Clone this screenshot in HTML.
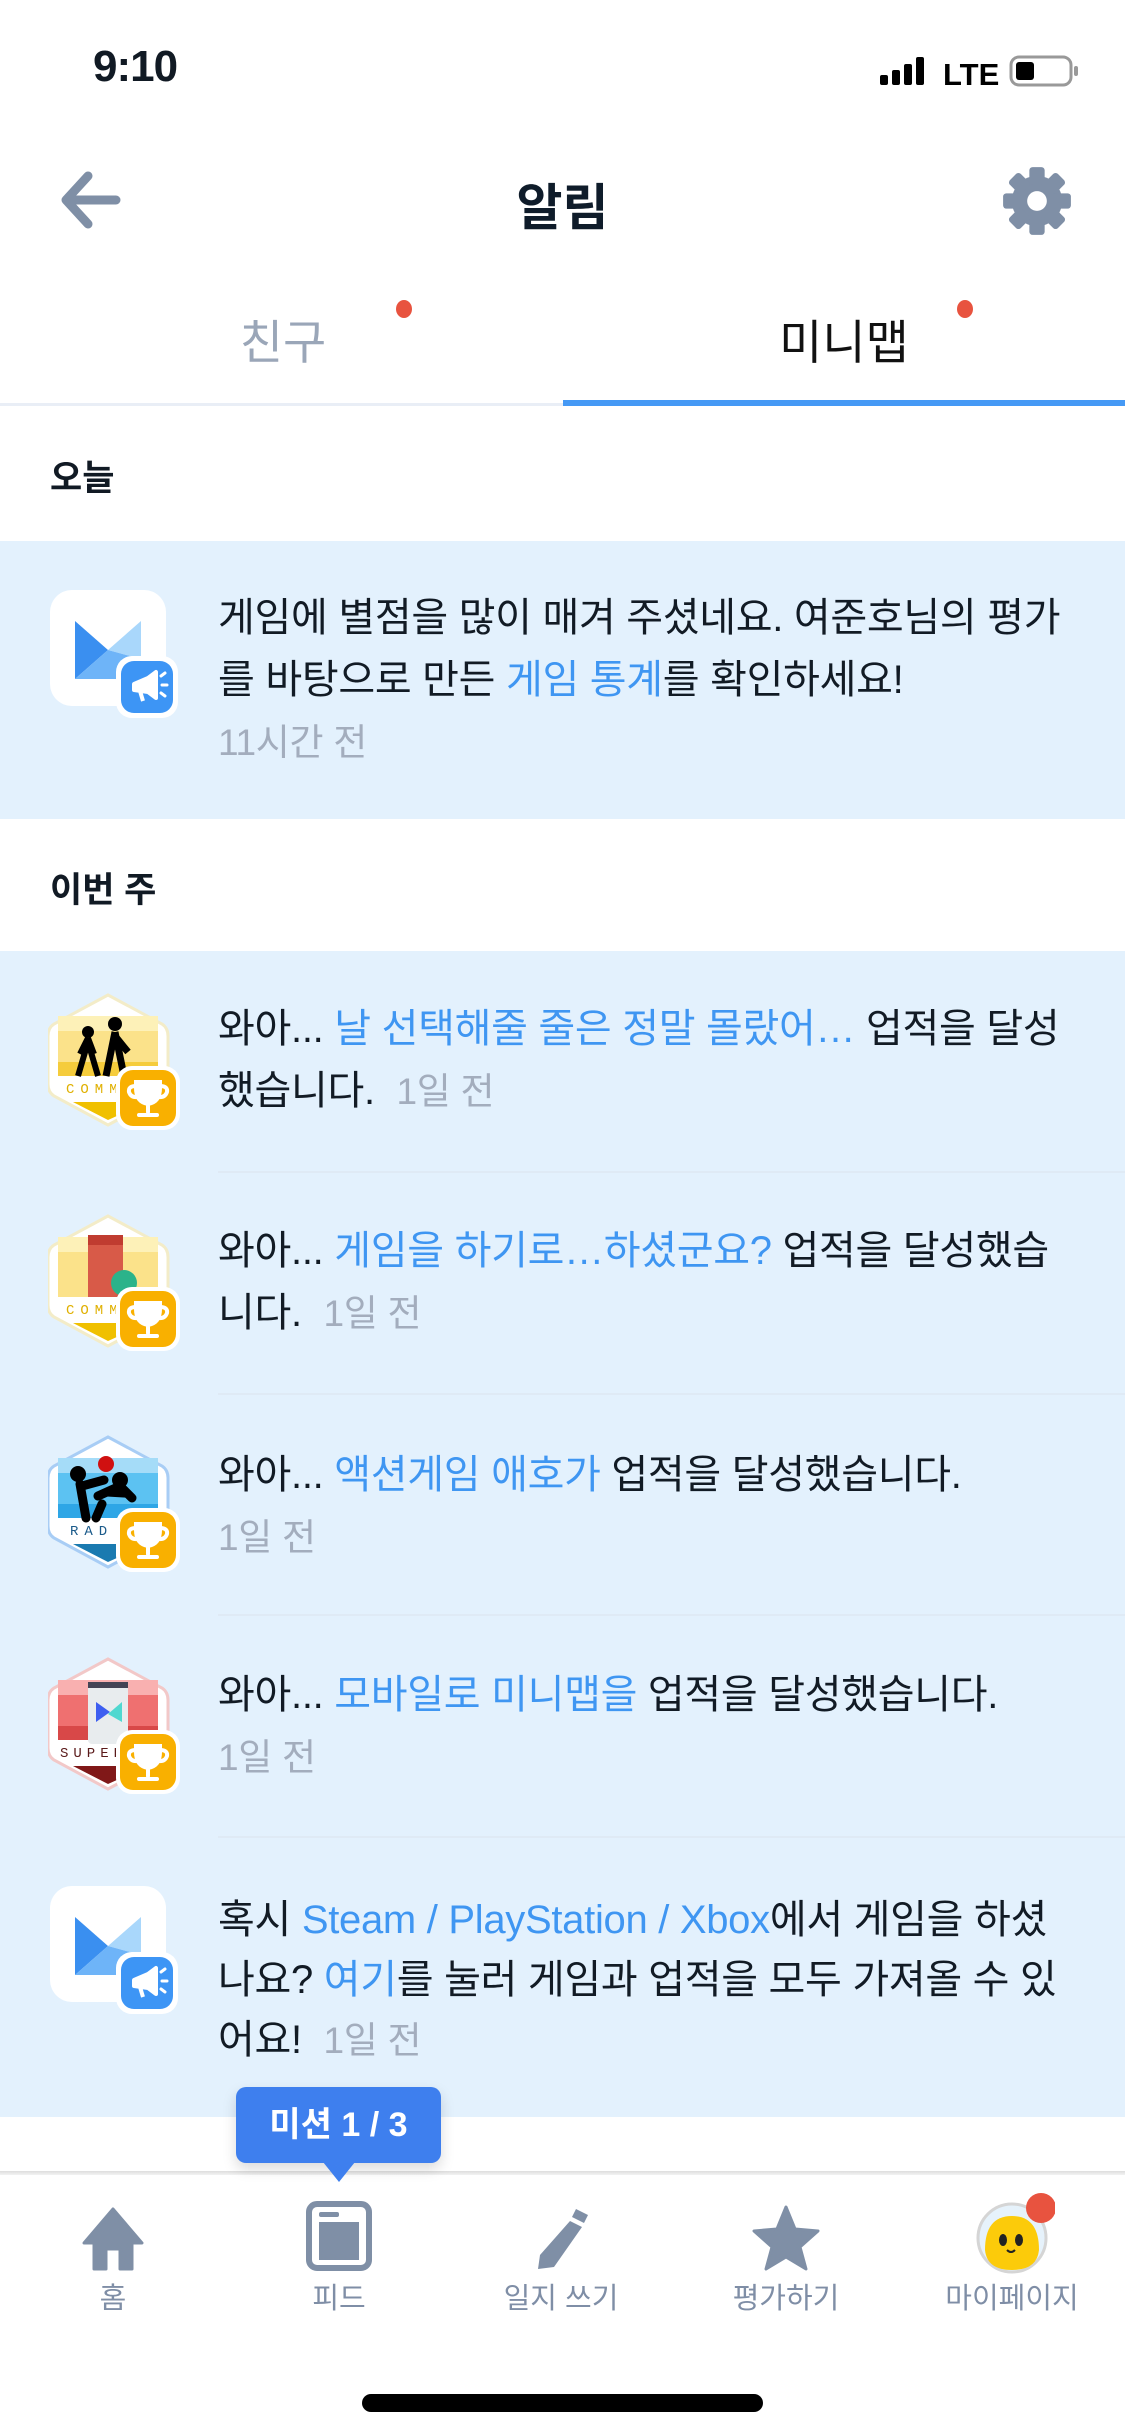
<!DOCTYPE html>
<html><head><meta charset="utf-8">
<style>
*{margin:0;padding:0;box-sizing:border-box}
body{width:1125px;height:2436px;position:relative;background:#fff;font-family:"Liberation Sans","Noto Sans CJK KR",sans-serif;color:#111a24;overflow:hidden}
.a{position:absolute}
.t{position:absolute;left:218px;font-size:40px;line-height:62px;white-space:nowrap;color:#121b25;letter-spacing:-0.3px}
.b{color:#3f96f2}
.g{color:#a3adbd;font-size:37px}
.sep{position:absolute;left:218px;right:0;height:2px;background:#dfeaf5}
.tab{position:absolute;top:2275px;font-size:29px;color:#7f8ea6;text-align:center;width:200px}
</style></head><body>
<!-- status bar -->
<div class="a" style="left:93px;top:42px;font-size:44px;font-weight:bold;letter-spacing:-1px">9:10</div>
<svg class="a" style="left:880px;top:55px" width="200" height="32">
<rect x="0" y="20" width="8" height="10" rx="2" fill="#000"/><rect x="12" y="15" width="8" height="15" rx="2" fill="#000"/><rect x="24" y="9" width="8" height="21" rx="2" fill="#000"/><rect x="36" y="2" width="8" height="28" rx="2" fill="#000"/>
<text x="63" y="30" font-family="Liberation Sans" font-size="31" font-weight="bold" fill="#000">LTE</text>
<rect x="131" y="2" width="60" height="28" rx="8" fill="none" stroke="#999" stroke-width="3"/><rect x="136" y="7" width="18" height="18" rx="3" fill="#000"/><rect x="194" y="11" width="4" height="10" rx="2" fill="#999"/>
</svg>
<!-- header -->
<svg class="a" style="left:58px;top:170px" width="64" height="60" viewBox="0 0 64 60"><path d="M30 6 L8 30 L30 54 M8 30 H58" stroke="#7f8fa6" stroke-width="9" fill="none" stroke-linecap="round" stroke-linejoin="round"/></svg>
<div class="a" style="left:0;width:1125px;top:168px;text-align:center;font-size:50px;font-weight:bold;color:#0f1c2a">알림</div>
<svg class="a" style="left:1002px;top:166px" width="70" height="70" viewBox="0 0 64 64"><g fill="#7f8fa6"><circle cx="32" cy="32" r="23"/><g id="tt"><rect x="25" y="1" width="14" height="16" rx="3"/><rect x="25" y="47" width="14" height="16" rx="3"/></g><use href="#tt" transform="rotate(45 32 32)"/><use href="#tt" transform="rotate(90 32 32)"/><use href="#tt" transform="rotate(135 32 32)"/></g><circle cx="32" cy="32" r="9" fill="#fff"/></svg>
<!-- tabs -->
<div class="a" style="left:183px;width:200px;top:304px;text-align:center;font-size:47px;color:#9aa6b8">친구</div>
<div class="a" style="left:744px;width:200px;top:304px;text-align:center;font-size:47px;color:#111">미니맵</div>
<div class="a" style="left:396px;top:300px;width:16px;height:18px;border-radius:50%;background:#e8533f"></div>
<div class="a" style="left:957px;top:300px;width:16px;height:18px;border-radius:50%;background:#e8533f"></div>
<div class="a" style="left:0;top:403px;width:563px;height:3px;background:#e9eef6"></div>
<div class="a" style="left:563px;top:400px;width:562px;height:6px;background:#4599f5"></div>
<!-- sections -->
<div class="a" style="left:50px;top:450px;font-size:35px;font-weight:bold">오늘</div>
<div class="a" style="left:0;top:541px;width:1125px;height:278px;background:#e3f1fd"></div>
<div class="a" style="left:50px;top:862px;font-size:35px;font-weight:bold">이번 주</div>
<div class="a" style="left:0;top:951px;width:1125px;height:1166px;background:#e3f1fd"></div>
<div class="sep" style="top:1171px"></div><div class="sep" style="top:1393px"></div><div class="sep" style="top:1614px"></div><div class="sep" style="top:1836px"></div>

<!-- app icon today -->
<svg class="a" style="left:48px;top:588px" width="132" height="132" viewBox="0 0 132 132">
<rect x="2" y="2" width="116" height="116" rx="22" fill="#fff"/>
<polygon points="27,33 60,62 27,91" fill="#3a8ff0"/><polygon points="93,33 93,71 60,62" fill="#a9d7fb"/><polygon points="27,91 60,62 93,71 93,91" fill="#6eb4f8"/>
<rect x="68" y="68" width="62" height="62" rx="16" fill="#fff"/><rect x="73" y="73" width="52" height="52" rx="13" fill="#3d95f5"/>
<path d="M86 96 L100 90 L108 84 L108 110 L100 104 L86 102 Z M92 103 L95 113" stroke="#fff" stroke-width="4" fill="#fff" stroke-linejoin="round"/><path d="M113 88 L117 85 M114 97 H119 M113 105 L117 108" stroke="#fff" stroke-width="3" stroke-linecap="round"/>
</svg>
<div class="t" style="top:587px">게임에 별점을 많이 매겨 주셨네요. 여준호님의 평가<br>를 바탕으로 만든 <span class="b">게임 통계</span>를 확인하세요!<br><span class="g">11시간 전</span></div>

<!-- badges -->
<svg width="0" height="0" style="position:absolute"><defs>
<g id="trophy"><rect x="68" y="74" width="64" height="64" rx="16" fill="#fff"/><rect x="72" y="78" width="56" height="56" rx="13" fill="#f9b000"/>
<path d="M88 90 H112 V96 Q112 110 100 112 Q88 110 88 96 Z M88 94 Q80 94 81 100 Q83 106 90 105 M112 94 Q120 94 119 100 Q117 106 110 105 M100 112 V120 M91 123 H109" stroke="#fff" stroke-width="4" fill="none" stroke-linecap="round"/><path d="M88 90 H112 V96 Q112 110 100 112 Q88 110 88 96 Z" fill="#fff"/></g>
<path id="hex" d="M60 3 L114 32 Q120 36 120 44 V92 Q120 100 114 104 L60 133 L6 104 Q0 100 0 92 V44 Q0 36 6 32 Z"/>
</defs></svg>

<svg class="a" style="left:48px;top:992px" width="140" height="145" viewBox="0 0 140 145">
<use href="#hex" fill="#fff" stroke="#f3ecc8" stroke-width="3"/><rect x="10" y="24" width="100" height="60" fill="#fbe28a"/><rect x="10" y="24" width="100" height="15" fill="#fdf1b8"/><rect x="10" y="70" width="100" height="14" fill="#f5cc3c"/>
<circle cx="40" cy="40" r="6" fill="#000"/><path d="M40 46 L32 62 M40 46 L46 62 M40 50 L30 84 M40 50 L50 84" stroke="#000" stroke-width="6"/><circle cx="67" cy="32" r="7" fill="#000"/><path d="M67 40 L58 84 M67 40 L76 84 M67 44 L80 60" stroke="#000" stroke-width="7"/>
<text x="18" y="101" font-size="14" fill="#e0b000" font-family="Liberation Mono" letter-spacing="6">COMM</text><path d="M25 110 L60 128 L100 110 Z" fill="#f0c000"/>
<use href="#trophy"/></svg>

<svg class="a" style="left:48px;top:1213px" width="140" height="145" viewBox="0 0 140 145">
<use href="#hex" fill="#fff" stroke="#f3ecc8" stroke-width="3"/><rect x="10" y="24" width="100" height="60" fill="#fbe28a"/><rect x="10" y="24" width="100" height="15" fill="#fdf1b8"/>
<rect x="40" y="22" width="35" height="62" fill="#d85a48"/><rect x="40" y="22" width="35" height="10" fill="#c03c30"/><circle cx="76" cy="70" r="13" fill="#2bb38a"/>
<text x="18" y="101" font-size="14" fill="#e0b000" font-family="Liberation Mono" letter-spacing="6">COMM</text><path d="M25 110 L60 128 L100 110 Z" fill="#f0c000"/>
<use href="#trophy"/></svg>

<svg class="a" style="left:48px;top:1434px" width="140" height="145" viewBox="0 0 140 145">
<use href="#hex" fill="#fff" stroke="#a8cdf5" stroke-width="3"/><rect x="10" y="24" width="100" height="60" fill="#5cc2f2"/><rect x="10" y="24" width="100" height="15" fill="#a5dcf8"/><rect x="10" y="70" width="100" height="14" fill="#2ea6e6"/>
<circle cx="30" cy="40" r="8" fill="#000"/><circle cx="72" cy="46" r="8" fill="#000"/><path d="M32 50 L38 84 M34 52 L56 46 M50 62 L72 52 L84 64 M54 70 L48 84" stroke="#000" stroke-width="9" stroke-linecap="round"/><circle cx="58" cy="30" r="8" fill="#d01010"/>
<text x="22" y="101" font-size="14" fill="#1a5a8a" font-family="Liberation Mono" letter-spacing="6">RAD</text><path d="M25 110 L60 128 L100 110 Z" fill="#1a7ab0"/>
<use href="#trophy"/></svg>

<svg class="a" style="left:48px;top:1656px" width="140" height="145" viewBox="0 0 140 145">
<use href="#hex" fill="#fff" stroke="#f2c8c8" stroke-width="3"/><rect x="10" y="24" width="100" height="60" fill="#ef7070"/><rect x="10" y="24" width="100" height="15" fill="#f9b0b0"/><rect x="10" y="70" width="100" height="14" fill="#d84848"/>
<rect x="40" y="26" width="40" height="62" rx="4" fill="#e8ecee"/><rect x="40" y="26" width="40" height="6" fill="#445"/><polygon points="48,46 62,56 48,66" fill="#3d5ef0"/><polygon points="74,46 74,66 60,58" fill="#50d8d0"/>
<text x="12" y="101" font-size="14" fill="#5a1a1a" font-family="Liberation Mono" letter-spacing="5">SUPER</text><path d="M25 110 L60 128 L100 110 Z" fill="#801818"/>
<use href="#trophy"/></svg>

<svg class="a" style="left:48px;top:1884px" width="132" height="132" viewBox="0 0 132 132">
<rect x="2" y="2" width="116" height="116" rx="22" fill="#fff"/>
<polygon points="27,33 60,62 27,91" fill="#3a8ff0"/><polygon points="93,33 93,71 60,62" fill="#a9d7fb"/><polygon points="27,91 60,62 93,71 93,91" fill="#6eb4f8"/>
<rect x="68" y="68" width="62" height="62" rx="16" fill="#fff"/><rect x="73" y="73" width="52" height="52" rx="13" fill="#3d95f5"/>
<path d="M86 96 L100 90 L108 84 L108 110 L100 104 L86 102 Z M92 103 L95 113" stroke="#fff" stroke-width="4" fill="#fff" stroke-linejoin="round"/><path d="M113 88 L117 85 M114 97 H119 M113 105 L117 108" stroke="#fff" stroke-width="3" stroke-linecap="round"/>
</svg>

<div class="t" style="top:998px">와아... <span class="b">날 선택해줄 줄은 정말 몰랐어…</span> 업적을 달성<br>했습니다. &nbsp;<span class="g">1일 전</span></div>
<div class="t" style="top:1220px">와아... <span class="b">게임을 하기로…하셨군요?</span> 업적을 달성했습<br>니다. &nbsp;<span class="g">1일 전</span></div>
<div class="t" style="top:1444px">와아... <span class="b">액션게임 애호가</span> 업적을 달성했습니다.<br><span class="g">1일 전</span></div>
<div class="t" style="top:1664px">와아... <span class="b">모바일로 미니맵을</span> 업적을 달성했습니다.<br><span class="g">1일 전</span></div>
<div class="t" style="top:1890px;line-height:60px">혹시 <span class="b">Steam / PlayStation / Xbox</span>에서 게임을 하셨<br>나요? <span class="b">여기</span>를 눌러 게임과 업적을 모두 가져올 수 있<br>어요! &nbsp;<span class="g">1일 전</span></div>

<!-- bottom bar -->
<div class="a" style="left:0;top:2171px;width:1125px;height:4px;background:linear-gradient(#ddd,#f3f3f3)"></div>
<div class="a" style="left:236px;top:2087px;width:205px;height:76px;border-radius:10px;background:#3e7fee;color:#fff;font-weight:bold;font-size:34px;text-align:center;line-height:76px;box-shadow:0 6px 14px rgba(0,0,0,.15)">미션 1 / 3</div>
<div class="a" style="left:323px;top:2162px;width:0;height:0;border-left:16px solid transparent;border-right:16px solid transparent;border-top:20px solid #3e7fee"></div>

<svg class="a" style="left:80px;top:2205px" width="66" height="66" viewBox="0 0 66 66"><path d="M33 4 L62 38 H52 V64 H40 V44 H26 V64 H14 V38 H4 Z" fill="#7f8fa6" stroke="#7f8fa6" stroke-width="3" stroke-linejoin="round"/></svg>
<svg class="a" style="left:305px;top:2200px" width="68" height="72" viewBox="0 0 68 72"><rect x="4" y="4" width="60" height="64" rx="8" fill="none" stroke="#7f8fa6" stroke-width="6"/><rect x="14" y="22" width="40" height="38" fill="#7f8fa6"/><rect x="14" y="12" width="20" height="5" rx="2" fill="#7f8fa6"/></svg>
<svg class="a" style="left:528px;top:2205px" width="66" height="66" viewBox="0 0 66 66"><path d="M48 4 L60 10 L56 18 L44 12 Z M42 16 L54 22 L26 62 L10 64 L12 50 Z" fill="#7f8fa6"/></svg>
<svg class="a" style="left:752px;top:2205px" width="68" height="66" viewBox="0 0 68 66"><path d="M34 2 L43 24 L66 26 L48 42 L54 64 L34 52 L14 64 L20 42 L2 26 L25 24 Z" fill="#7f8fa6" stroke="#7f8fa6" stroke-width="3" stroke-linejoin="round"/></svg>
<svg class="a" style="left:975px;top:2190px" width="80" height="85" viewBox="0 0 80 85"><circle cx="37" cy="48" r="34" fill="#e6f2fb" stroke="#d5d5d5" stroke-width="3"/><path d="M10 60 Q10 26 37 26 Q64 26 64 60 Q62 80 37 80 Q12 80 10 60 Z" fill="#fccb0a"/><ellipse cx="28" cy="50" rx="4" ry="6" fill="#222"/><ellipse cx="44" cy="50" rx="4" ry="6" fill="#222"/><path d="M32 60 Q36 64 40 60" stroke="#222" stroke-width="2" fill="none"/><circle cx="66" cy="18" r="15" fill="#e8533f"/></svg>

<div class="tab" style="left:13px">홈</div>
<div class="tab" style="left:239px">피드</div>
<div class="tab" style="left:461px">일지 쓰기</div>
<div class="tab" style="left:686px">평가하기</div>
<div class="tab" style="left:912px">마이페이지</div>

<div class="a" style="left:362px;top:2394px;width:401px;height:18px;border-radius:9px;background:#000"></div>
</body></html>
